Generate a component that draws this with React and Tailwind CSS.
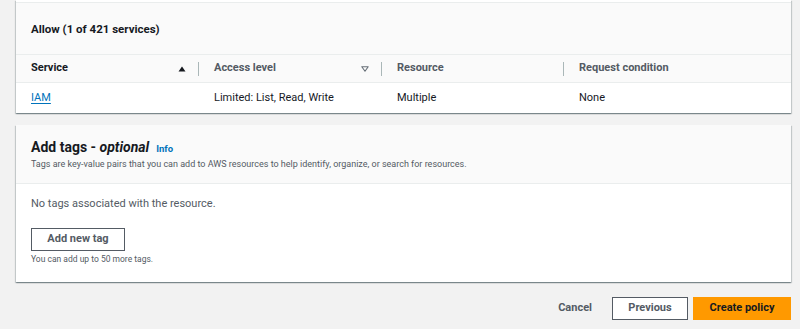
import React from 'react';

const columns = [
  { label: 'Service', sort: 'asc', strong: true },
  { label: 'Access level', sort: 'desc' },
  { label: 'Resource' },
  { label: 'Request condition', last: true },
];

function SortIcon({ dir }) {
  if (dir === 'asc') {
    return (
      <svg width="8" height="6" viewBox="0 0 8 6" className="shrink-0">
        <path d="M4 0.5 L7.5 5.5 L0.5 5.5 Z" fill="#16191f" />
      </svg>
    );
  }
  return (
    <svg width="8" height="6" viewBox="0 0 8 6" className="shrink-0">
      <path d="M0.8 0.8 L7.2 0.8 L4 5.2 Z" fill="none" stroke="#687078" strokeWidth="1.1" strokeLinejoin="round" />
    </svg>
  );
}

export default function App() {
  const font = { fontFamily: '"Roboto", "Noto Sans", sans-serif' };

  return (
    <div className="min-h-screen bg-[#f2f2f2] pl-4 pr-[9px] text-[#16191f]" style={font}>
      {/* permissions summary card */}
      <div className="bg-white shadow-[0_1px_1px_0_rgba(0,28,36,0.3),1px_1px_1px_0_rgba(0,28,36,0.15),-1px_1px_1px_0_rgba(0,28,36,0.15)]">
        <div className="h-[3px] border-b border-[#eaeded]" />
        <div className="h-[51px] bg-[#fafafa] flex items-center px-[15px] pt-[3px]">
          <h3 className="text-[11.5px] font-bold">Allow (1 of 421 services)</h3>
        </div>
        <div className="grid grid-cols-[183px_183px_182px_1fr] h-[29px] bg-[#fafafa] border-y border-[#eaeded] items-center">
          {columns.map((c) => (
            <div key={c.label} className="flex items-center h-full pl-[15px]">
              <span className={`flex-1 text-[11px] font-bold ${c.strong ? 'text-[#16191f]' : 'text-[#545b64]'}`}>
                {c.label}
              </span>
              {c.sort && <span className="mr-[12px]"><SortIcon dir={c.sort} /></span>}
              {!c.last && <span className="w-px h-[14px] bg-[#aab7b8]" />}
            </div>
          ))}
        </div>
        <div className="grid grid-cols-[183px_183px_182px_1fr] h-[30px] items-center text-[11px]">
          <div className="pl-[15px]">
            <a href="#" className="text-[#0073bb] underline underline-offset-2">IAM</a>
          </div>
          <div className="pl-[15px]">Limited: List, Read, Write</div>
          <div className="pl-[15px]">Multiple</div>
          <div className="pl-[15px]">None</div>
        </div>
      </div>

      {/* tags card */}
      <div className="mt-[12px] bg-white shadow-[0_1px_1px_0_rgba(0,28,36,0.3),1px_1px_1px_0_rgba(0,28,36,0.15),-1px_1px_1px_0_rgba(0,28,36,0.15)]">
        <div className="h-[59px] bg-[#fafafa] border-b border-[#eaeded] px-[15px] pt-[12px]">
          <div className="flex items-baseline gap-[7px]">
            <h2 className="text-[14px] font-bold leading-[20px]">
              Add tags - <i>optional</i>
            </h2>
            <a href="#" className="text-[9.5px] font-bold text-[#0073bb]">Info</a>
          </div>
          <p className="text-[9px] text-[#545b64] leading-[14px]">
            Tags are key-value pairs that you can add to AWS resources to help identify, organize, or search for resources.
          </p>
        </div>
        <div className="px-[15px] pt-[12px] pb-[16px]">
          <p className="text-[11px] text-[#545b64] leading-[16px]">No tags associated with the resource.</p>
          <button className="mt-[16px] w-[94px] h-[23px] border border-[#545b64] bg-white text-[11px] font-bold text-[#545b64]">
            Add new tag
          </button>
          <p className="mt-[2px] text-[8.5px] text-[#545b64] leading-[13px]">You can add up to 50 more tags.</p>
        </div>
      </div>

      {/* footer actions */}
      <div className="flex justify-end items-center gap-[5px] pt-[15px]">
        <button className="text-[11px] font-bold text-[#545b64] px-[15px]">Cancel</button>
        <button className="w-[76px] h-[23px] border border-[#545b64] bg-white text-[11px] font-bold text-[#545b64]">
          Previous
        </button>
        <button className="w-[98px] h-[23px] bg-[#ff9900] text-[11px] font-bold text-[#16191f]">
          Create policy
        </button>
      </div>
    </div>
  );
}
